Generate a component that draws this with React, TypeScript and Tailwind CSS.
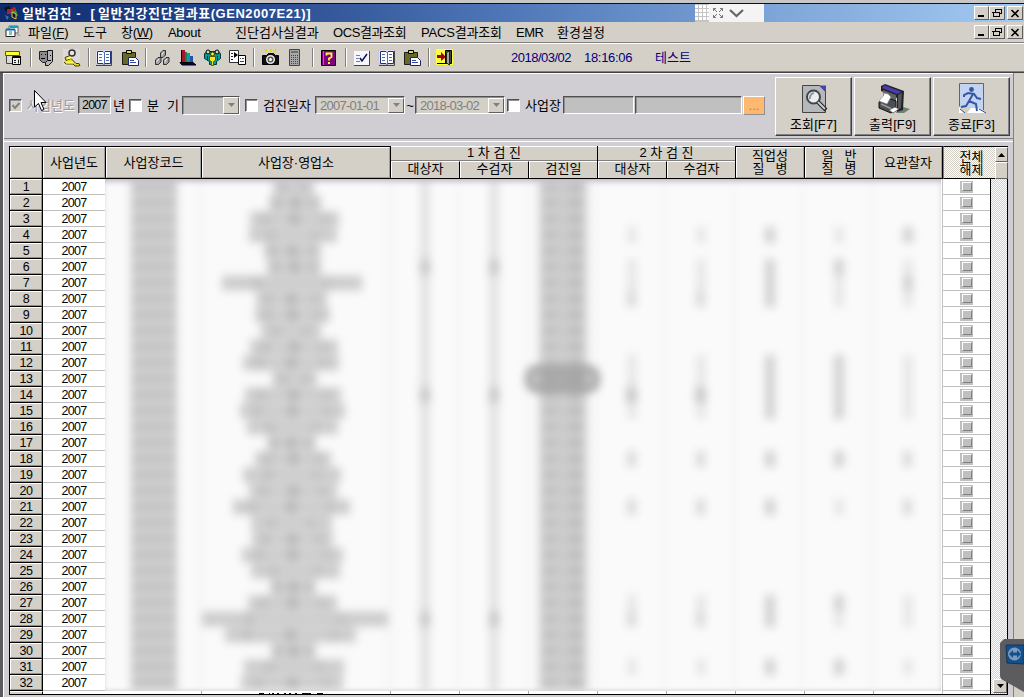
import React from "react";

const FONT = "font-['Liberation_Sans','Noto_Sans_CJK_KR',sans-serif]";
const RAISED = "border border-t-white border-l-white border-r-[#606060] border-b-[#606060] bg-[#d4d0c8]";
const SUNKEN = "border border-t-[#505050] border-l-[#505050] border-r-white border-b-white shadow-[inset_1px_1px_0_#909090]";
const DITHER = "bg-[repeating-conic-gradient(#d2cec6_0_25%,#ffffff_0_50%)] bg-[length:2px_2px]";

const NAMES: [number, number][] = [
  [274, 315], [270, 322], [251, 340], [250, 338], [265, 322], [268, 322], [223, 363], [257, 328],
  [256, 331], [262, 322], [251, 339], [244, 340], [273, 318], [246, 342], [241, 346], [248, 339],
  [268, 317], [256, 332], [244, 342], [250, 338], [234, 351], [252, 333], [253, 334], [243, 344],
  [252, 341], [271, 317], [249, 338], [203, 389], [226, 357], [272, 317], [245, 345], [242, 344],
];
// Tone of the five right-hand counters, per row; rows that are absent are empty.
const COUNTS: Record<number, number[]> = {
  4: [1, 1, 3, 1, 3], 6: [1, 1, 3, 3, 1], 7: [1, 1, 3, 1, 3], 8: [2, 2, 3, 1, 1],
  12: [1, 1, 3, 3, 1], 13: [1, 1, 3, 3, 1], 14: [4, 4, 3, 3, 1], 15: [1, 1, 3, 3, 1],
  18: [2, 2, 3, 3, 2], 21: [2, 2, 3, 1, 2], 27: [1, 1, 3, 3, 1], 28: [2, 2, 3, 1, 1], 31: [1, 1, 3, 3, 1],
};
const TONES = ["", "bg-[#e4e4e4] w-[8px]", "bg-[#dadada] w-[9px]", "bg-[#d2d2d2] w-[10px]", "bg-[#cacaca] w-[11px]"];

function WinButtons() {
  const b = "h-[14px] flex items-center justify-center " + RAISED;
  return (
    <div className="flex">
      <div className={b + " w-[15px]"}><svg width="11" height="10"><path d="M2 8h6" stroke="#000" strokeWidth="2" /></svg></div>
      <div className={b + " w-[16px]"}>
        <svg width="11" height="10" fill="none" stroke="#000" shapeRendering="crispEdges"><path d="M3 1h6M3 1.500h6.500v4H8M3.500 1v3M1 4.500h6v4H1.500z M1 4h6" /></svg>
      </div>
      <div className={b + " ml-[2px] w-[16px]"}><svg width="10" height="9"><path d="M1.500 1l7 7M8.500 1l-7 7" stroke="#000" strokeWidth="1.600" /></svg></div>
    </div>
  );
}

function Icon({ m, w = 18, children }: { m: string; w?: number; children: React.ReactNode }) {
  return <svg className={m + " shrink-0"} width={w} height="18" viewBox={`0 0 ${w} 18`} fill="none">{children}</svg>;
}
const Sep = ({ m }: { m: string }) => <div className={m + " h-[19px] w-[2px] shrink-0 border-l border-[#808080] bg-white"} />;

const Book = () => (
  <>
    <path d="M1 1h15v14H1z" fill="#fff" stroke="#c0c0e0" />
    <path d="M2.500 2.500h5.500l1 1 1-1h5.500v12H10l-1 1-1-1H2.500z" fill="#fff" stroke="#203078" />
    <path d="M9.500 3v12M4 5.500h3M4 8.500h3M4 11.500h3M11 5.500h3M11 8.500h3M11 11.500h3" stroke="#5068b8" />
    <path d="M1 16.500h15.500V2" stroke="#444" />
  </>
);
const Paste = () => (
  <>
    <path d="M1.500 3.500h13v12h-13z" fill="#68682c" stroke="#1c1c10" />
    <path d="M5.500 1.500h5v3h-5z" fill="#d8d860" stroke="#000" />
    <path d="M7.500 8.500h7l3 3v5h-10z" fill="#fff" stroke="#202070" />
    <path d="M9 11.500h4M9 13.500h6" stroke="#3048a0" />
  </>
);

function Toolbar() {
  return (
    <div className="flex h-[28px] items-center border-t border-white pl-[5px]">
      <Icon m=""><path d="M.5 2.500h14v4H.5z" fill="#ffff30" stroke="#605800" /><path d="M1.500 6.500h10v8h-10z" fill="#d8d8d8" stroke="#444" /><path d="M7.500 7.500h8v8h-8z" fill="#eee" stroke="#000" /><path d="M8 8h8" stroke="#000" strokeWidth="2" /><path d="M9 11.500h2M9 13.500h2M13.500 10.500v4" stroke="#222" /></Icon>
      <Sep m="ml-[7px]" />
      <Icon m="ml-[5px]"><path d="M2.500 2.500h8v9l-2 2h-3l-3-3z" fill="#8c8c8c" stroke="#222" /><path d="M10.500 1.500h5v11l-4 4h-3v-3l2-2z" fill="#b4b4b4" stroke="#111" /><path d="M4 5.500h1M8 5.500h1M4 9.500h4M13 6.500h1M11 11.500h3" stroke="#000" /></Icon>
      <Icon m="ml-[8px]"><path d="M0 0h17v17H0z" fill="#dedada" /><circle cx="9" cy="4" r="3" stroke="#333" strokeWidth="1.500" fill="#e8e8e8" /><path d="M7 6.500L2 8.500l1 3 5-2 5 5h3l1 2-2 .5h-3l-2-2H3L1 13" fill="#e6dc20" stroke="#454000" /><path d="M4 9.500l4-1M3 13.500h7" stroke="#fffc60" strokeWidth="2" /></Icon>
      <Sep m="ml-[7px]" />
      <Icon m="ml-[5px]"><Book /></Icon>
      <Icon m="ml-[8px]"><Paste /></Icon>
      <Sep m="ml-[6px]" />
      <Icon m="ml-[7px]"><path d="M6.500 8.500V4L9 1.500h2.500V6L9 8.500zM1.500 15.500V11L4 8.500h3V13l-2.500 2.500zM9.500 15.500V11L12 8.500h3V13l-2.500 2.500z" fill="#a0a0a0" stroke="#303030" /><path d="M8 6.500V5l2-2M3 13.500V12l2-2M11 13.500V12l2-2" stroke="#eee" /></Icon>
      <Icon m="ml-[7px]"><path d="M3 1h3v12H3z" fill="#a01830" /><path d="M6 3h2v10H6z" fill="#208040" /><path d="M8 4h3v9H8z" fill="#00a0b0" /><path d="M11 7h3v6h-3z" fill="#2850b0" /><path d="M2.500 1v12" stroke="#000" /><path d="M1 13.500h13l3 2.500H3z" fill="#00005c" stroke="#000" /></Icon>
      <Icon m="ml-[7px]"><path d="M.5 4.500l3-2h10l3 2v5l-4 3v3h-7v-3l-5-3z" fill="#00a09c" stroke="#003838" /><circle cx="4" cy="3" r="2" fill="#d8e0b0" stroke="#000" /><circle cx="13" cy="3" r="2" fill="#c8d0d0" stroke="#000" /><circle cx="8.500" cy="5" r="2" fill="#f4e820" stroke="#403800" /><path d="M5.500 7.500h6v4l-2 1v4h-2v-4l-2-1z" fill="#f4e820" stroke="#605800" /><path d="M3.500 7v4M13.500 7v4" stroke="#003040" /></Icon>
      <Icon m="ml-[7px]"><path d="M.5 1.500h9v12h-9z" fill="#fff" stroke="#333" /><path d="M2 4.500h2M2 7.500h2M2 10.500h2" stroke="#222" /><path d="M5 3l4 3-4 3z" fill="#000" /><path d="M9.500 6.500h7v9h-7z" fill="#fff" stroke="#000" /><path d="M11 9.500h1M11 12.500h4M13 9.500h2" stroke="#444" /></Icon>
      <Sep m="ml-[6px]" />
      <Icon m="ml-[7px]"><path d="M3 0l2 3M9 0v3M14 0l-2 3" stroke="#e8d800" strokeWidth="2" /><path d="M.5 6.500h4l2-2h5l2 2h3v9H.5z" fill="#101010" stroke="#000" /><circle cx="8.500" cy="10.500" r="3.800" fill="#555" stroke="#e8e8e8" strokeWidth="1.500" /><circle cx="8.500" cy="10.500" r="1.500" fill="#fff" /></Icon>
      <Icon m="ml-[8px]" w={14}><path d="M1.500.5h10v16h-10z" fill="#a8a8a8" stroke="#444" /><path d="M3 2h7v2H3z" fill="#707070" /><path d="M3 6.500h8M3 8.500h8M3 10.500h8M3 12.500h8M3 14.500h8" stroke="#444" strokeDasharray="1 1" /></Icon>
      <Sep m="ml-[10px]" />
      <Icon m="ml-[7px]" w={16}><path d="M.5 1.500h14v15H.5z" fill="#800080" stroke="#000" /><path d="M2.500 2v14" stroke="#c050c0" /><path d="M5.500 6.500V4.500h5v3.500L8 9.500v2M7 14h2" stroke="#ffff30" strokeWidth="1.800" /></Icon>
      <Sep m="ml-[8px]" />
      <Icon m="ml-[6px]"><path d="M1 2h15v14H1z" fill="#f6f6ff" /><path d="M1 16.500h15.500V2" stroke="#444" /><path d="M3 6.500h4M3 9.500h3M3 12.500h4" stroke="#7080b0" /><path d="M7 9l2 3 5-7" stroke="#101050" strokeWidth="1.500" /></Icon>
      <Icon m="ml-[7px]"><Book /></Icon>
      <Icon m="ml-[7px]"><Paste /></Icon>
      <Sep m="ml-[7px]" />
      <Icon m="ml-[6px]"><path d="M0 0h17v16H0z" fill="#ffff40" /><path d="M9.500 1.500h6v13h-6z" fill="#444" stroke="#000" /><path d="M10.500 3.500l3-1.500v14l-3-2z" fill="#a8a8a8" stroke="#222" /><path d="M1 6h4V3l5 5-5 4V9H1z" fill="#a00010" /><path d="M1 14.500h9" stroke="#000" /></Icon>
      <div className="flex text-[13px] leading-none text-[#000080]">
        <span className="ml-[57px] w-[73px] shrink-0 whitespace-nowrap tracking-[-0.5px]">2018/03/02</span>
        <span className="w-[71px] shrink-0 tracking-[-0.3px]">18:16:06</span>
        <span>테스트</span>
      </div>
    </div>
  );
}

function Check({ m, on }: { m: string; on?: boolean }) {
  return (
    <div className={`${m} h-[13px] w-[13px] shrink-0 ${SUNKEN} ${on ? "bg-[#d4d0c8]" : "bg-white"}`}>
      {on && <svg width="11" height="11"><path d="M2.500 5l2.500 3 4.500-5" stroke="#808080" strokeWidth="2" fill="none" /></svg>}
    </div>
  );
}
function Drop({ c }: { c: string }) {
  return <div className={`${c} ml-auto flex shrink-0 items-center justify-center ${RAISED}`}><svg width="7" height="4"><path d="M0 0h7L3.500 4z" fill="#808080" /></svg></div>;
}

function BigButton({ label, children }: { label: string; children: React.ReactNode }) {
  return (
    <div className="mr-[2px] flex h-[59px] w-[77px] shrink-0 flex-col items-center border border-t-white border-l-white border-r-[#404040] border-b-[#404040] bg-[#d4d0c8] pt-[4px] shadow-[inset_-1px_-1px_0_#808080]">
      <svg width="34" height="33" viewBox="0 0 34 33">{children}</svg>
      <span className="mt-[3px] text-[13px] leading-[14px] tracking-[0.1px]">{label}</span>
    </div>
  );
}

function Filters() {
  return (
    <div className="flex h-[66px] items-start border-t border-white border-b border-b-[#808080] pl-[5px] text-[13px] leading-none">
      <div className="mt-[21px] flex h-[20px] shrink-0 items-center">
        <Check m="" on />
        <span className="ml-[5px] w-[51px] shrink-0 whitespace-nowrap text-[#989898] [text-shadow:1px_1px_0_#fff]">사업년도</span>
        <div className={"flex h-[18px] w-[33px] shrink-0 items-center bg-[#c0c0c0] pl-[3px] text-[12.500px] tracking-[-0.8px] " + SUNKEN}>2007</div>
        <span className="ml-[2px] w-[16px] shrink-0">년</span>
        <Check m="" />
        <span className="ml-[5px] w-[35px] shrink-0 whitespace-pre tracking-[0.3px]">{"분  기"}</span>
        <div className={"flex h-[19px] w-[58px] shrink-0 bg-[#c0c0c0] " + SUNKEN}><Drop c="h-[17px] w-[16px]" /></div>
        <Check m="ml-[5px]" />
        <span className="ml-[5px] w-[52px] shrink-0 whitespace-nowrap">검진일자</span>
        <div className={"flex h-[18px] w-[90px] shrink-0 items-center bg-[#d4d0c8] pl-[4px] tracking-[-0.75px] text-[#808080] " + SUNKEN}>2007-01-01<Drop c="h-[15px] w-[16px]" /></div>
        <span className="w-[10px] shrink-0 text-center">~</span>
        <div className={"flex h-[18px] w-[90px] shrink-0 items-center bg-[#d4d0c8] pl-[4px] tracking-[-0.75px] text-[#808080] " + SUNKEN}>2018-03-02<Drop c="h-[15px] w-[16px]" /></div>
        <Check m="ml-[2px]" />
        <span className="ml-[5px] w-[38px] shrink-0 whitespace-nowrap">사업장</span>
        <div className={"h-[18px] w-[71px] shrink-0 bg-[#c0c0c0] " + SUNKEN} />
        <div className={"ml-[1px] h-[18px] w-[107px] shrink-0 bg-[#c0c0c0] " + SUNKEN} />
        <div className="ml-px flex h-[19px] w-[22px] shrink-0 items-end justify-center border border-t-white border-l-white border-r-[#909090] border-b-[#909090] bg-[#ffb870] pb-[2px] text-[#b08050]">...</div>
      </div>
      <div className="ml-[10px] mt-[3px] flex">
        <BigButton label="조회[F7]">
          <path d="M5.500 3.500h17l6 6v21h-23z" fill="#b4b8bc" stroke="#444" />
          <path d="M22 3.500l7 7v-7z" fill="#4848a0" />
          <circle cx="16.500" cy="15" r="6.500" fill="#e8eef2" stroke="#444" strokeWidth="2" />
          <path d="M13 17a5 5 0 0 1 4-6" stroke="#9098a0" fill="none" strokeWidth="2" />
          <path d="M21 20l8 8" stroke="#222" strokeWidth="4" /><path d="M21 20l7 7" stroke="#ccc" strokeWidth="2" />
        </BigButton>
        <BigButton label="출력[F9]">
          <path d="M24 24l10 3-6 4h-8z" fill="#71816f" />
          <path d="M5 4l4-2 19 7-1 19-6 2V16L5 9z" fill="#222" />
          <path d="M8 3l18 7-5 2L6 6z" fill="#4a3cb0" />
          <path d="M7 8l13 5v14l-13-5z" fill="#606468" />
          <path d="M22 13l4-2-1 15-3 2z" fill="#50545c" />
          <path d="M3 20l6-5 11 4v8l-5 4-12-5z" fill="#4c5054" stroke="#111" />
          <path d="M3 19l5-6-1-2 5 1 3 3-4 7z" fill="#fff" stroke="#888" strokeWidth=".6" />
          <path d="M5 22l11 5" stroke="#999" strokeWidth="1.500" />
          <path d="M13 28l6-3 4 2-6 4z" fill="#fff" stroke="#444" strokeWidth=".7" />
        </BigButton>
        <BigButton label="종료[F3]">
          <path d="M4 1h25v30l-5-2V25H4z" fill="#c4d4f0" />
          <path d="M4.500 1.500h24V28M4.500 1.500v23" stroke="#4468a8" fill="none" />
          <path d="M4 25l5 6h-5z M12 31l4-5h8l6 5z" fill="#fff" />
          <circle cx="16.500" cy="7.500" r="2.400" fill="#3458a4" />
          <path d="M9 15v-2l4-2 6 1 3 4 4 1M18 12l-4 7 7 3 1 7M14 19l-3 5-5 1" stroke="#3458a4" strokeWidth="2" fill="none" />
          <path d="M5 27l5 4M24 27l7 4" stroke="#3050a0" />
        </BigButton>
      </div>
    </div>
  );
}

function Head({ w, children, c = "" }: { w: string; children?: React.ReactNode; c?: string }) {
  return (
    <div className={`${w} h-[33px] shrink-0 border-t border-r border-b border-black`}>
      <div className={`flex h-full w-full items-center justify-center border border-t-white border-l-white border-r-[#a0a0a0] border-b-[#a0a0a0] bg-[#d4d0c8] text-center whitespace-pre ${c}`}>{children}</div>
    </div>
  );
}
function Group({ title, cols, w }: { title: string; cols: string[]; w: string }) {
  return (
    <div className={`${w} flex h-[33px] shrink-0 flex-col border-r border-b border-black bg-[#d4d0c8]`}>
      <div className="flex h-[15px] items-center justify-center border-t border-b border-t-white border-b-[#808080] pb-[2px] whitespace-pre">{title}</div>
      <div className="flex flex-1">
        {cols.map((c, i) => (
          <div key={c} className={`flex flex-1 items-center justify-center border-t border-l border-white pb-[3px] ${i < cols.length - 1 ? "border-r border-r-black" : ""}`}>{c}</div>
        ))}
      </div>
    </div>
  );
}

function GridHeader() {
  return (
    <div className="flex h-[33px] text-[13px] leading-[13px]">
      <Head w="w-[33px]" />
      <Head w="w-[63px]">사업년도</Head>
      <Head w="w-[96px]">사업장코드</Head>
      <Head w="w-[189px]">사업장·영업소</Head>
      <Group w="w-[207px]" title="1 차 검 진" cols={["대상자", "수검자", "검진일"]} />
      <Group w="w-[138px]" title="2 차 검 진" cols={["대상자", "수검자"]} />
      <Head w="w-[69px]" c="pb-[2px]">{"직업성\n질   병"}</Head>
      <Head w="w-[69px]" c="pb-[2px]">{"일   반\n질   병"}</Head>
      <Head w="w-[69px]">요관찰자</Head>
      <div className={`flex w-[52px] shrink-0 items-center justify-center border-t border-b border-l border-t-black border-b-black border-l-[#808080] pl-[4px] text-center whitespace-pre ${DITHER}`}>{"전체\n해제"}</div>
      <div className="flex w-[13px] shrink-0 flex-col border-t border-black">
        <div className={"flex h-[15px] items-center justify-center " + RAISED}><svg width="7" height="4"><path d="M0 4h7L3.500 0z" fill="#000" /></svg></div>
        <div className={"h-[17px] " + RAISED} />
      </div>
    </div>
  );
}

function Obscured() {
  return (
    <div className="relative h-[512px] w-[836px] overflow-hidden bg-[#fafafa]">
      <div className="blur-[4.500px]">
        {NAMES.map(([a, b], i) => {
          const n = i + 1;
          const counts = COUNTS[n] ?? [0, 0, 0, 0, 0];
          const strong = n === 6 || n === 14 || n === 28;
          return (
            <div key={n} className="flex h-[16px] items-center">
              <div className="flex h-full w-[96px] items-center border-r border-[#e6e6e6] pl-[26px]"><div className="h-[16px] w-[46px] border-y-[3px] border-[#d2d2d2] bg-[#c4c4c4]" /></div>
              <div className="flex h-full w-[189px] items-center border-r border-[#e6e6e6]">
                <div className="flex h-[16px] justify-around border-y-[2px] border-[#d8d8d8] bg-[#cdcdcd]" style={{ marginLeft: a - 202, width: b - a }}>
                  <div className="h-full w-[8px] bg-[#c0c0c0]" />
                  {n % 3 !== 1 && <div className="h-full w-[9px] bg-[#b6b6b6]" />}
                  <div className="h-full w-[7px] bg-[#c2c2c2]" />
                </div>
              </div>
              {[0, 1].map((k) => (
                <div key={k} className="flex h-full w-[69px] items-center justify-center border-r border-[#eaeaea] pl-[2px]"><div className={`h-[16px] ${strong ? "w-[10px] bg-[#c6c6c6]" : "w-[8px] bg-[#dedede]"}`} /></div>
              ))}
              <div className="flex h-full w-[69px] items-center justify-center border-r border-[#eaeaea] pl-[3px]">
                <div className="flex h-[16px] w-[48px] justify-around border-y-[3px] border-[#d0d0d0] bg-[#cacaca]">
                  <div className="h-full w-[12px] bg-[#c2c2c2]" /><div className="h-full w-[12px] bg-[#bcbcbc]" />
                </div>
              </div>
              {counts.map((t, k) => (
                <div key={k} className="flex h-full w-[69px] items-center justify-center border-r border-[#eaeaea] pl-[3px]">{t > 0 && <div className={`h-[16px] ${TONES[t]}`} />}</div>
              ))}
            </div>
          );
        })}
        <div className="absolute top-[186px] left-[420px] h-[28px] w-[75px] rounded-[12px] border-[6px] border-[#a4a4a4] bg-[#84848470]" />
      </div>
      <div className="absolute inset-0 shadow-[inset_0_5px_6px_-3px_#b4b0b4,inset_0_-3px_5px_-3px_#c8c8c8]" />
    </div>
  );
}

function GridBody() {
  return (
    <div className="flex h-[515px] overflow-hidden">
      <div className="w-[33px] shrink-0 text-[12.500px] leading-[15px]">
        {NAMES.map((_, i) => (
          <div key={i} className="h-[16px] border-r border-b border-black">
            <div className="h-[15px] border border-t-white border-l-white border-r-[#909090] border-b-[#909090] bg-[#d4d0c8] text-center tracking-[-0.4px]">{i + 1}</div>
          </div>
        ))}
        <div className="h-[3px] border-t border-r border-white border-r-black bg-[#d4d0c8]" />
      </div>
      <div className="w-[62px] shrink-0 bg-white text-center text-[12.500px] leading-[16px] tracking-[-0.7px]">
        {NAMES.map((_, i) => <div key={i} className="h-[16px] border-b border-[#c0c0c0]">2007</div>)}
      </div>
      <div className="w-[837px] shrink-0 bg-white">
        <Obscured />
        <svg width="837" height="3"><path d="M154 2.500h5M164 2.500h1M167 2.500h2M172 2.500h2M179 2.500h2M184 2.500h2M190 2.500h2M197 2.500h9M212 2.500h6" stroke="#111" /><path d="M96.500 0v3M285.500 0v3M354.500 0v3M423.500 0v3M492.500 0v3M561.500 0v3M630.500 0v3M699.500 0v3M768.500 0v3" stroke="#aaa" /></svg>
      </div>
      <div className="w-[49px] shrink-0 border-l border-r border-l-[#c0c0c0] border-r-black bg-white">
        {NAMES.map((_, i) => (
          <div key={i} className="flex h-[16px] items-center justify-center border-b border-[#c0c0c0]">
            <div className="flex h-[12px] w-[13px] items-center justify-center bg-[#c0c0c0]"><div className="h-[9px] w-[10px] border border-t-white border-l-white border-r-[#808080] border-b-[#808080]" /></div>
          </div>
        ))}
      </div>
      <div className={`flex w-[16px] shrink-0 flex-col justify-end pl-[2px] ${DITHER}`}>
        <div className={"mb-[1px] flex h-[14px] items-center justify-center " + RAISED}><svg width="7" height="4"><path d="M0 0h7L3.500 4z" fill="#000" /></svg></div>
      </div>
    </div>
  );
}

export default function App() {
  return (
    <div className={`relative flex h-[697px] w-[1024px] flex-col overflow-hidden bg-[#d4d0c8] text-black ${FONT}`}>
      <div className="flex h-[4px] shrink-0 border-b-[1.500px] border-[#101018] bg-[#c9c7c6]" />
      <div className="flex h-[18px] shrink-0 items-center bg-[linear-gradient(90deg,#0e2a70_0%,#24468a_22%,#5078b8_50%,#7ea6d8_76%,#a4caf2_100%)] pr-[1px] pl-[3px]">
        <svg width="16" height="16" viewBox="0 0 16 16"><path d="M1 3l5-2 3 5-4 3z" fill="#101010" /><path d="M4 4h5v5H4z" fill="#a02050" /><path d="M8 4l5 1 2 6-5-1z" fill="#20a030" /><path d="M9 7l4 2v5l-4-2z" fill="#101030" stroke="#e0d020" /><path d="M2 10l4 2-2 3z" fill="#308090" /><circle cx="11" cy="4" r="2" fill="#c02020" /></svg>
        <span className="ml-[3px] text-[13px] leading-none font-bold tracking-[0.55px] whitespace-pre text-white">{"일반검진 "}<span className="tracking-[3.200px]">- [</span>{"일반건강진단결과표(GEN2007E21)]"}</span>
        <div className="ml-auto"><WinButtons /></div>
      </div>
      <div className="flex h-[21px] shrink-0 items-center border-b border-[#808080] pr-[1px] pl-[5px] text-[13px] leading-none whitespace-nowrap">
        <svg width="17" height="14" viewBox="0 0 17 14"><path d="M4 1h9v7H4z" fill="#fff" stroke="#666" /><path d="M1 4.500h9v7H1z" fill="#fff" stroke="#222" /><path d="M1 4.500h9" stroke="#0868a8" strokeWidth="2" /><path d="M5 2h8" stroke="#18a0b0" strokeWidth="2" /><path d="M4 7h3M4 9h3" stroke="#088" /><path d="M13 8l3 3h-4z" fill="#aac" /></svg>
        <div className="ml-[6px] w-[55px]">파일(<u>F</u>)</div>
        <div className="w-[38px]">도구</div>
        <div className="w-[47px] tracking-[-0.3px]">창(<u>W</u>)</div>
        <div className="w-[67px] tracking-[-0.3px]">About</div>
        <div className="w-[98px]">진단검사실결과</div>
        <div className="w-[88px] tracking-[-0.4px]">OCS결과조회</div>
        <div className="w-[95px] tracking-[-0.2px]">PACS결과조회</div>
        <div className="w-[41px] tracking-[-0.5px]">EMR</div>
        <div>환경설정</div>
        <div className="ml-auto"><WinButtons /></div>
      </div>
      <Toolbar />
      <div className="h-[2px] shrink-0 border-t border-[#808080] bg-[#404040]" />
      <div className="flex h-[624px] border-l-[3px] border-[#5c5c60]">
        <div className="flex w-[1011px] shrink-0 flex-col border-l border-r border-l-white border-r-[#808080] bg-[#d0ced3]">
          <Filters />
          <div className="mt-[2px] border-t border-white" />
          <div className="mt-[4px] ml-[5px] w-[999px] border-l border-r border-b border-black">
            <GridHeader />
            <GridBody />
          </div>
        </div>
      </div>

      <div className="absolute top-[4px] left-[695px] flex h-[18px] w-[69px] items-center bg-[#f4f4f4]">
        <svg width="14" height="18"><path d="M0 0h14v18H0z" fill="#c4c4c4" /><path d="M0 2.500h14M0 6.500h14M0 10.500h14M0 14.500h14" stroke="#fff" strokeWidth="3" strokeDasharray="3 1" /></svg>
        <svg className="ml-[3px]" width="12" height="12" fill="none" stroke="#777"><path d="M1.500 4V1.500H4M1.500 1.500L5 5M8 1.500h2.500V4M10.500 1.500L7 5M1.500 8v2.500H4M1.500 10.500L5 7M8 10.500h2.500V8M10.500 10.500L7 7" /></svg>
        <svg className="ml-[5px]" width="15" height="9"><path d="M1 1l6.500 6L14 1" stroke="#666" strokeWidth="2.200" fill="none" /></svg>
      </div>
      <svg className="absolute top-[90px] left-[34px]" width="13" height="22"><path d="M.5.5v16.500l4-3.500 3 7 2.500-1-3-7h5z" fill="#fff" stroke="#000" /></svg>
      <svg className="absolute top-[639px] left-[1000px]" width="24" height="54" viewBox="0 0 24 54">
        <path d="M4 0h20v53L1 40 0 37V4z" fill="#5c5c5e" />
        <path d="M6 6h18v19l-17-1z" fill="#12508e" stroke="#103660" />
        <circle cx="14.500" cy="15" r="6.500" fill="#7d9cb8" /><path d="M9 15l4-4v2.500h4V11l4 4-4 4v-2.500h-4V19z" fill="#12508e" />
      </svg>
    </div>
  );
}
